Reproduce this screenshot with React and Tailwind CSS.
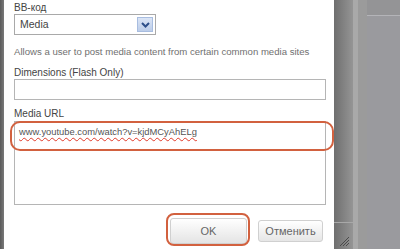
import React from 'react';

// BB-code dialog with highlighted URL field and OK button
function App() {
  return (
    <div className="w-[400px] h-[249px] flex overflow-hidden bg-[#9a9a9e] font-['Liberation_Sans',Arial,sans-serif] text-[10px] text-[#444]">
      <div className="w-[4px] bg-gradient-to-r from-[#5a5a5a] to-[#7a7a7a]" />

      <div className="relative w-[330px] bg-white pl-[10px] pr-[8px] pt-[2px]">
        <div className="leading-[12px]">BB-код</div>
        <div className="w-[142px] h-[21px] border border-[#a9a9a9] flex items-center justify-between pl-[5px] pr-[2px]">
          <span className="text-[10.5px]">Media</span>
          <span className="w-[16px] h-[15px] bg-gradient-to-b from-[#dbe5f6] to-[#bccde9] border border-[#a8bde0] flex items-center justify-center">
            <svg width="9" height="6" viewBox="0 0 9 6">
              <path d="M1 1 L4.5 4.5 L8 1" fill="none" stroke="#2d4f8a" strokeWidth="2" />
            </svg>
          </span>
        </div>
        <div className="mt-[10px] leading-[13px] text-[9.6px] whitespace-nowrap text-[#707070]">
          Allows a user to post media content from certain common media sites
        </div>
        <div className="mt-[9px] leading-[12px]">Dimensions (Flash Only)</div>
        <div className="w-[312px] h-[21px] border border-[#b5b5b5]" />
        <div className="mt-[8px] leading-[12px]">Media URL</div>
        <div className="w-[312px] h-[84px] border border-[#b5b5b5] mt-[1px] pl-[4px] pt-[4px] leading-[12px]">
          <span className="text-[9.4px] underline decoration-wavy decoration-[#e03a2a] decoration-1 underline-offset-2 text-[#555]">
            www.youtube.com/watch?v=kjdMCyAhELg
          </span>
        </div>

        <div className="mt-[13px] flex items-center pl-[156px] gap-[11px]">
          <button className="w-[77px] h-[26px] border border-[#d0d0d0] rounded-[3px] bg-gradient-to-b from-[#ffffff] to-[#e4e4e4] text-[#666] text-[11px]">
            OK
          </button>
          <button className="w-[65px] h-[22px] border border-[#d0d0d0] rounded-[3px] bg-gradient-to-b from-[#ffffff] to-[#e6e6e6] text-[#666] text-[11px]">
            Отменить
          </button>
        </div>

        <div className="absolute left-[6px] top-[121px] w-[324px] h-[30px] border-2 border-[#d2613f] rounded-[10px] pointer-events-none" />
        <div className="absolute left-[162px] top-[213px] w-[84px] h-[33px] border-2 border-[#d2613f] rounded-[8px] pointer-events-none" />
      </div>

      <div className="w-[19px] flex flex-col bg-gradient-to-r from-[#6f6f6f] to-[#959595]">
        <div className="h-[222px]" />
        <div className="flex-1 border-t border-[#a8a8a8] flex items-end justify-end pr-[3px] pb-[2px]">
          <svg width="12" height="12" viewBox="0 0 12 12">
            <path d="M11 2 L2 11 M11 5 L5 11 M11 8 L8 11" stroke="#4a4a4a" strokeWidth="1" />
          </svg>
        </div>
      </div>
      <div className="w-[5px] bg-[#a9a9a9]" />
      <div className="w-[9px] bg-[#9b9b9b]" />
      <div className="flex-1 flex flex-col bg-[#9a9a9e]">
        <div className="h-[16px] bg-[#949496] border-b border-[#b4b4b8]" />
      </div>
    </div>
  );
}

export default App;
